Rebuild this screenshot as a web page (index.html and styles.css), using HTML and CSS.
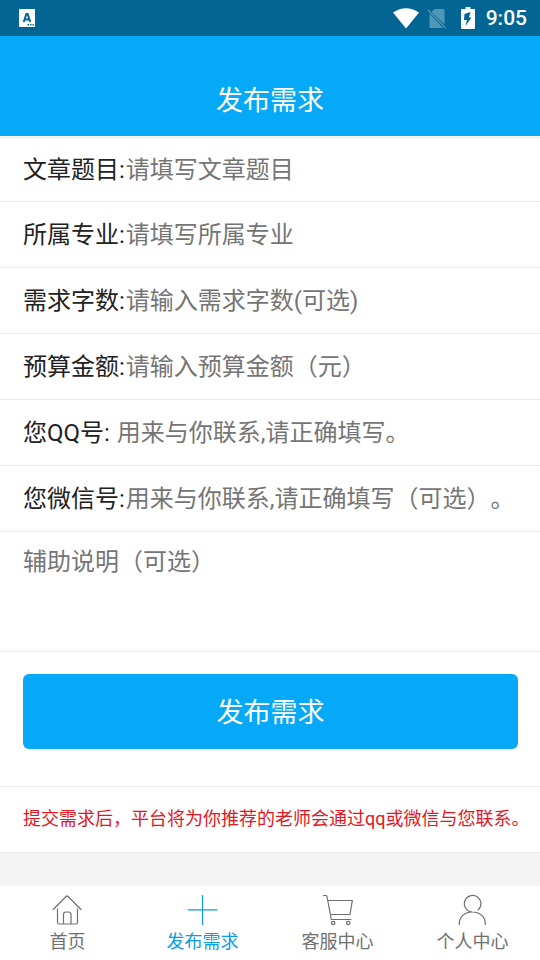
FILE: index.html
```html
<!DOCTYPE html>
<html lang="zh-CN">
<head>
<meta charset="utf-8">
<meta name="viewport" content="width=device-width, initial-scale=1">
<title>发布需求</title>
<link rel="stylesheet" href="styles.css">
</head>
<body>
<div class="status">
  <svg class="status-app" width="16" height="18" viewBox="0 0 16 18" aria-hidden="true">
    <rect width="16" height="18" rx="1" fill="#fff"/>
    <path d="M4.700 13 7.400 5h1.200l2.700 8M5.800 10.400h4.400" fill="none" stroke="#036593" stroke-width="2"/>
    <path d="M8.500 15h1.500v1.500H8.500zM11 15h1.500v1.500H11zM13.500 15H15v1.500h-1.500z" fill="#036593"/>
  </svg>
  <div class="status-right">
    <svg width="26" height="21" viewBox="0 0 26 21" aria-hidden="true"><path d="M0 4.500Q13-4 26 4.500L13 20.500z" fill="#fff"/></svg>
    <svg class="status-sim" width="20" height="21" viewBox="0 0 20 21" aria-hidden="true">
      <path d="M7.500 1H16q1.500 0 1.500 1.500V16.500L4.500 4zM2.500 5.500 16 20H4q-1.500 0-1.500-1.500z" fill="#4f96b7"/>
      <path d="M1 2l17.500 18" stroke="#4f96b7" stroke-width="1.500"/>
    </svg>
    <svg class="status-battery" width="14" height="22" viewBox="0 0 14 22" aria-hidden="true">
      <path d="M4.500 0h5v2H13q1 0 1 1v18q0 1-1 1H1q-1 0-1-1V3q0-1 1-1h3.500z" fill="#fff"/>
      <path d="M9.500 5 3.500 7 3 13h3L4.500 19l6-8.500H8z" fill="#036593"/>
    </svg>
    <time class="clock">9:05</time>
  </div>
</div>
<header class="header"><h1>发布需求</h1></header>
<main class="main">
  <form class="form">
    <div class="row"><label for="title">文章题目:</label><input id="title" type="text" placeholder="请填写文章题目"></div>
    <div class="row"><label for="major">所属专业:</label><input id="major" type="text" placeholder="请填写所属专业"></div>
    <div class="row"><label for="words">需求字数:</label><input id="words" type="text" placeholder="请输入需求字数(可选)"></div>
    <div class="row"><label for="budget">预算金额:</label><input id="budget" type="text" placeholder="请输入预算金额（元）"></div>
    <div class="row"><label for="qq">您QQ号:&nbsp;</label><input id="qq" type="text" placeholder="用来与你联系,请正确填写。"></div>
    <div class="row"><label for="wechat">您微信号:</label><input id="wechat" type="text" placeholder="用来与你联系,请正确填写（可选）。"></div>
    <div class="note"><textarea aria-label="辅助说明" placeholder="辅助说明（可选）"></textarea></div>
    <div class="action"><button type="button">发布需求</button></div>
    <p class="tip">提交需求后，平台将为你推荐的老师会通过qq或微信与您联系。</p>
  </form>
</main>
<nav class="tabs">
  <a class="tab" href="#home">
    <svg width="32" height="32" viewBox="0 0 32 32" aria-hidden="true"><path d="M.8 16 14 2.500q1-1 2 0L29.500 16M5.500 14.500v14q0 1.500 1.500 1.500h17q1.500 0 1.500-1.500v-14M11.500 30V20.500q0-2.500 2.500-2.500h2.500q2.500 0 2.500 2.500V30"/></svg>
    <span>首页</span>
  </a>
  <a class="tab active" href="#publish">
    <svg width="32" height="32" viewBox="0 0 32 32" aria-hidden="true"><path d="M15.500 1v30M.8 15.800h29.700"/></svg>
    <span>发布需求</span>
  </a>
  <a class="tab" href="#service">
    <svg width="32" height="32" viewBox="0 0 32 32" aria-hidden="true"><path d="M1 1.500h3q.8 0 1 1L9.300 25.500h20M6 6.500h24.300L28 20.500H8.500"/><circle cx="11.200" cy="29" r="1.700"/><circle cx="26.300" cy="29" r="1.700"/></svg>
    <span>客服中心</span>
  </a>
  <a class="tab" href="#mine">
    <svg width="32" height="32" viewBox="0 0 32 32" aria-hidden="true"><path d="M20.800 16.200A8.300 8.300 0 1 0 15.300 18M2.300 31V29.500C2.300 22.500 8.300 18 15.300 18s13 4.500 13 11.500V31"/></svg>
    <span>个人中心</span>
  </a>
</nav>
</body>
</html>
```
FILE: styles.css
```css
* {
  box-sizing: border-box;
}

body {
  margin: 0;
  min-height: 100vh;
  display: flex;
  flex-direction: column;
  background: #f4f4f4;
  color: #222;
  font-family: Roboto, "Noto Sans CJK SC", sans-serif;
  font-size: 24px;
  text-spacing-trim: space-all;
}

.status {
  display: flex;
  align-items: center;
  justify-content: space-between;
  height: 36px;
  padding: 0 13px 0 19px;
  background: #036593;
}

.status-right {
  display: flex;
  align-items: center;
}

.status-sim {
  margin-left: 8px;
}

.status-battery {
  margin-left: 14px;
}

.clock {
  margin-left: 11px;
  color: #fff;
  font-size: 21px;
  font-weight: 500;
  line-height: 36px;
}

.header {
  padding: 45px 0 15px;
  background: #05a9f7;
  color: #fff;
  text-align: center;
}

.header h1 {
  margin: 0;
  font-size: 27px;
  font-weight: 400;
  line-height: 40px;
}

.main {
  flex: 1;
}

.form {
  padding-top: 1px;
  background: #fff;
}

.row {
  display: flex;
  align-items: center;
  height: 66px;
  padding-left: 23px;
  border-bottom: 1px solid #ebebeb;
}

.row:first-child {
  height: 65px;
  border-top: 1px solid #ebebeb;
}

.row label {
  line-height: 36px;
}

.row input,
.note textarea {
  min-width: 0;
  flex: 1;
  padding: 0;
  border: 0;
  outline: 0;
  background: transparent;
  color: #222;
  font: inherit;
  line-height: 36px;
  text-spacing-trim: inherit;
}

.row input {
  height: 36px;
  padding-left: 1px;
}

input::placeholder,
textarea::placeholder {
  color: #757575;
  opacity: 1;
}

.note {
  display: flex;
  height: 120px;
  padding: 12px 23px;
  border-bottom: 1px solid #ebebeb;
}

.note textarea {
  resize: none;
}

.action {
  padding: 22px 22px 37px 23px;
  border-bottom: 1px solid #ebebeb;
}

.action button {
  display: block;
  width: 100%;
  height: 75px;
  padding: 0 0 2px;
  border: 0;
  border-radius: 6px;
  background: #05a9f7;
  color: #fff;
  font: inherit;
  font-size: 27px;
}

.tip {
  margin: 0;
  padding: 0 0 2px 23px;
  border-bottom: 1px solid #ebebeb;
  color: #e6151e;
  font-size: 18px;
  line-height: 63px;
  white-space: nowrap;
}

.tabs {
  display: flex;
  height: 74px;
  background: #fff;
}

.tab {
  flex: 1;
  display: flex;
  flex-direction: column;
  align-items: center;
  padding-top: 8px;
  color: #707070;
  font-size: 18px;
  line-height: 32px;
  text-decoration: none;
}

.tab svg {
  fill: none;
  stroke: currentColor;
  stroke-width: 1.2;
}

.tab.active {
  color: #0b9ce8;
}
```
